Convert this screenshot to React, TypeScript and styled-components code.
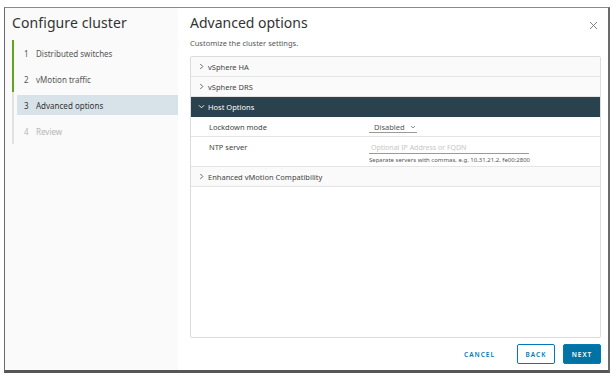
import React, { useState } from 'react';
import styled, { createGlobalStyle } from 'styled-components';

const GlobalStyle = createGlobalStyle`
  html, body {
    margin: 0;
    padding: 0;
    background: #ffffff;
    font-family: "Noto Sans", "Liberation Sans", sans-serif;
  }
`;

const Page = styled.div`
  width: 612px;
  height: 381px;
  padding: 7px 0 0 4px;
  box-sizing: border-box;
`;

const Modal = styled.div`
  width: 606px;
  height: 366px;
  box-sizing: border-box;
  display: flex;
  border-top: 1px solid #8a8a8a;
  border-left: 1px solid #6a6a6a;
  border-right: 2px solid #6a6a6a;
  border-bottom: 3px solid #565656;
  background: #fff;
`;

const Sidebar = styled.div`
  width: 173px;
  flex-shrink: 0;
  background: #fafafa;
  display: flex;
  flex-direction: column;
  padding: 6px 0 0 7px;
  box-sizing: border-box;
`;

const SideTitle = styled.div`
  font-size: 14px;
  color: #333;
  height: 26px;
  line-height: 18px;
  letter-spacing: 0.1px;
`;

const StepList = styled.div`
  border-left: 2px solid #e2e2e2;
  display: flex;
  flex-direction: column;
`;

const Step = styled.div<{ $done?: boolean }>`
  margin-left: -2px;
  border-left: 2px solid ${(p) => (p.$done ? '#62a420' : 'transparent')};
  padding: 3px 0 3px 3px;
`;

const StepLabel = styled.div<{ $active?: boolean; $disabled?: boolean }>`
  height: 20px;
  display: flex;
  align-items: center;
  padding-left: 7px;
  font-size: 8px;
  color: ${(p) => (p.$disabled ? '#b5b5b5' : p.$active ? '#333' : '#565656')};
  background: ${(p) => (p.$active ? '#d8e3e9' : 'transparent')};
`;

const StepNum = styled.span`
  width: 12px;
`;

const Content = styled.div`
  flex: 1;
  display: flex;
  flex-direction: column;
  padding: 6px 7px 0 12px;
  box-sizing: border-box;
  & > * {
    flex-shrink: 0;
  }
`;

const Header = styled.div`
  display: flex;
  justify-content: space-between;
  align-items: flex-start;
  height: 24px;
`;

const Title = styled.div`
  font-size: 14px;
  line-height: 18px;
  color: #333;
`;

const CloseButton = styled.button`
  border: none;
  background: none;
  padding: 0;
  margin: 7px 2px 0 0;
  width: 10px;
  height: 10px;
  display: flex;
  cursor: pointer;
`;

const Subtitle = styled.div`
  font-size: 7.5px;
  color: #565656;
  height: 18px;
  line-height: 10px;
`;

const Stack = styled.div`
  height: 282px;
  box-sizing: border-box;
  border: 1px solid #dcdcdc;
  border-radius: 2px;
  display: flex;
  flex-direction: column;
  overflow: hidden;
`;

const StackHead = styled.div<{ $open?: boolean }>`
  height: 19px;
  flex-shrink: 0;
  display: flex;
  align-items: center;
  padding-left: 7px;
  gap: 3px;
  font-size: 7.5px;
  border-bottom: 1px solid ${(p) => (p.$open ? '#29414e' : '#e5e5e5')};
  background: ${(p) => (p.$open ? '#2a414e' : '#fafafa')};
  color: ${(p) => (p.$open ? '#fff' : '#444')};
`;

const StackRow = styled.div<{ $tall?: boolean }>`
  height: ${(p) => (p.$tall ? 29 : 19)}px;
  flex-shrink: 0;
  display: flex;
  border-bottom: 1px solid #e5e5e5;
  background: #fff;
`;

const RowLabel = styled.div`
  width: 160px;
  padding-left: 18px;
  font-size: 7.5px;
  color: #444;
  padding-top: 5px;
`;

const RowValue = styled.div`
  padding-top: 4px;
  display: flex;
  flex-direction: column;
`;

const Select = styled.div`
  width: 43px;
  height: 11px;
  border-bottom: 1px solid #9a9a9a;
  display: flex;
  align-items: center;
  gap: 5px;
  padding-left: 5px;
  font-size: 7.5px;
  color: #555;
`;

const Input = styled.input`
  width: 158px;
  height: 12px;
  border: none;
  border-bottom: 1px solid #9a9a9a;
  padding: 0 0 0 2px;
  font-family: inherit;
  font-size: 7px;
  color: #444;
  outline: none;
  background: transparent;
  &::placeholder {
    color: #c6c6c6;
  }
`;

const Help = styled.div`
  font-size: 6px;
  color: #555;
  margin-top: 2px;
`;

const Footer = styled.div`
  height: 32px;
  display: flex;
  justify-content: flex-end;
  align-items: center;
  gap: 8px;
`;

const Button = styled.button<{ $variant: 'flat' | 'outline' | 'solid' }>`
  height: 20px;
  min-width: 38px;
  padding: 0 7px;
  font-family: inherit;
  font-size: 6.5px;
  font-weight: 600;
  letter-spacing: 1px;
  border-radius: 2px;
  cursor: pointer;
  border: 1px solid ${(p) => (p.$variant === 'flat' ? 'transparent' : '#0079b8')};
  background: ${(p) => (p.$variant === 'solid' ? '#0072a3' : '#fff')};
  color: ${(p) => (p.$variant === 'solid' ? '#fff' : '#0079b8')};
  margin-left: ${(p) => (p.$variant === 'outline' ? '6px' : '0')};
`;

const Chevron = ({ open, color }: { open?: boolean; color: string }) => (
  <svg width="7" height="7" viewBox="0 0 7 7" style={{ transform: open ? 'rotate(90deg)' : 'none' }}>
    <path d="M2.3 1 L4.8 3.5 L2.3 6" fill="none" stroke={color} strokeWidth="0.9" />
  </svg>
);

const steps = [
  { n: 1, label: 'Distributed switches', done: true },
  { n: 2, label: 'vMotion traffic', done: true },
  { n: 3, label: 'Advanced options', active: true },
  { n: 4, label: 'Review', disabled: true },
];

const App: React.FC = () => {
  const [ntp, setNtp] = useState('');

  return (
    <Page>
      <GlobalStyle />
      <Modal>
        <Sidebar>
          <SideTitle>Configure cluster</SideTitle>
          <StepList>
            {steps.map((s) => (
              <Step key={s.n} $done={s.done}>
                <StepLabel $active={s.active} $disabled={s.disabled}>
                  <StepNum>{s.n}</StepNum>
                  {s.label}
                </StepLabel>
              </Step>
            ))}
          </StepList>
        </Sidebar>
        <Content>
          <Header>
            <Title>Advanced options</Title>
            <CloseButton aria-label="Close">
              <svg width="9" height="9" viewBox="0 0 9 9">
                <path d="M1 1 L8 8 M8 1 L1 8" stroke="#777" strokeWidth="0.9" />
              </svg>
            </CloseButton>
          </Header>
          <Subtitle>Customize the cluster settings.</Subtitle>
          <Stack>
            <StackHead>
              <Chevron color="#555" />
              vSphere HA
            </StackHead>
            <StackHead>
              <Chevron color="#555" />
              vSphere DRS
            </StackHead>
            <StackHead $open>
              <Chevron open color="#fff" />
              Host Options
            </StackHead>
            <StackRow>
              <RowLabel>Lockdown mode</RowLabel>
              <RowValue>
                <Select>
                  Disabled
                  <svg width="6" height="4" viewBox="0 0 6 4">
                    <path d="M1 1 L3 3 L5 1" fill="none" stroke="#777" strokeWidth="0.8" />
                  </svg>
                </Select>
              </RowValue>
            </StackRow>
            <StackRow $tall>
              <RowLabel>NTP server</RowLabel>
              <RowValue>
                <Input
                  value={ntp}
                  placeholder="Optional IP Address or FQDN"
                  onChange={(e) => setNtp(e.target.value)}
                />
                <Help>Separate servers with commas, e.g. 10.31.21.2, fe00:2800</Help>
              </RowValue>
            </StackRow>
            <StackHead>
              <Chevron color="#555" />
              Enhanced vMotion Compatibility
            </StackHead>
          </Stack>
          <Footer>
            <Button $variant="flat">CANCEL</Button>
            <Button $variant="outline">BACK</Button>
            <Button $variant="solid">NEXT</Button>
          </Footer>
        </Content>
      </Modal>
    </Page>
  );
};

export default App;
